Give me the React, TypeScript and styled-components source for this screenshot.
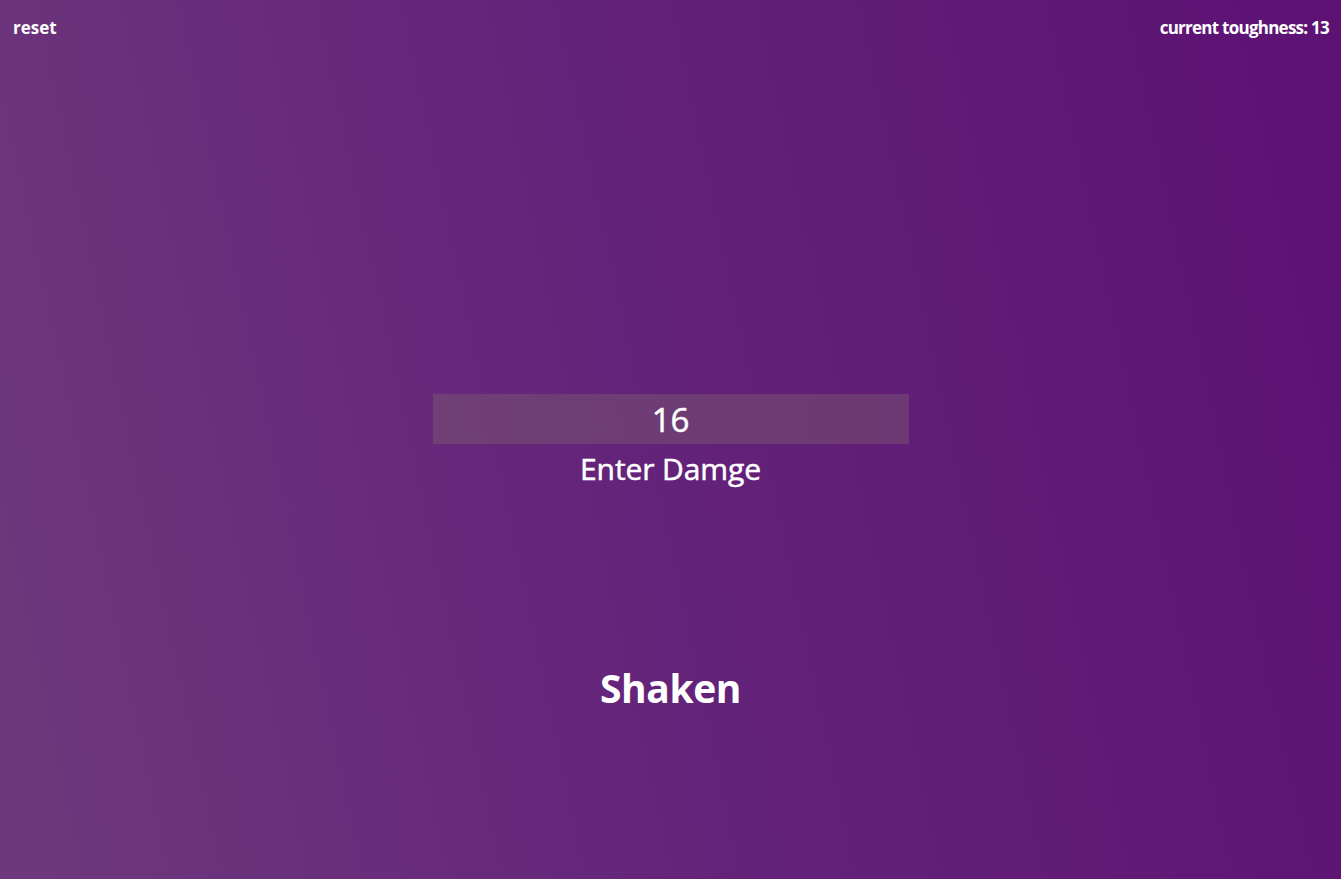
import React from "react";
import styled, { createGlobalStyle } from "styled-components";

const GlobalStyle = createGlobalStyle`
  html, body { margin: 0; padding: 0; }
  body {
    font-family: "Open Sans", "Noto Sans", sans-serif;
    color: #ffffff;
  }
  * { box-sizing: border-box; }
`;

const Page = styled.div`
  min-height: 100vh;
  display: flex;
  flex-direction: column;
  background: linear-gradient(78deg, #6e397c 0%, #64247a 45%, #5c1173 100%);
`;

const TopBar = styled.header`
  display: flex;
  justify-content: space-between;
  align-items: center;
  padding: 17px 12px 0 13px;
`;

const TopLink = styled.span<{ $tracking: number }>`
  font-size: 17px;
  font-weight: 700;
  line-height: 22px;
  letter-spacing: ${(p) => p.$tracking}px;
  color: #ffffff;
  cursor: pointer;
`;

const Main = styled.main`
  display: flex;
  flex-direction: column;
  align-items: center;
  padding-top: 355px;
`;

const DamageInput = styled.input`
  width: 476px;
  height: 50px;
  border: none;
  outline: none;
  background: rgba(122, 86, 112, 0.5);
  color: #ffffff;
  text-align: center;
  font-family: inherit;
  font-size: 33px;
  -webkit-text-stroke: 0.5px #ffffff;
  padding: 0;
`;

const Label = styled.label`
  margin-top: 5px;
  font-size: 30px;
  line-height: 40px;
  letter-spacing: -0.1px;
  -webkit-text-stroke: 0.5px #ffffff;
  color: #ffffff;
`;

const Status = styled.h1`
  margin: 173px 0 0;
  font-size: 39px;
  line-height: 52px;
  font-weight: 700;
  letter-spacing: -0.4px;
  color: #ffffff;
`;

export default function App() {
  return (
    <>
      <GlobalStyle />
      <Page>
        <TopBar>
          <TopLink $tracking={0}>reset</TopLink>
          <TopLink $tracking={-0.75}>current toughness: 13</TopLink>
        </TopBar>
        <Main>
          <DamageInput defaultValue="16" id="damage" />
          <Label htmlFor="damage">Enter Damge</Label>
          <Status>Shaken</Status>
        </Main>
      </Page>
    </>
  );
}
